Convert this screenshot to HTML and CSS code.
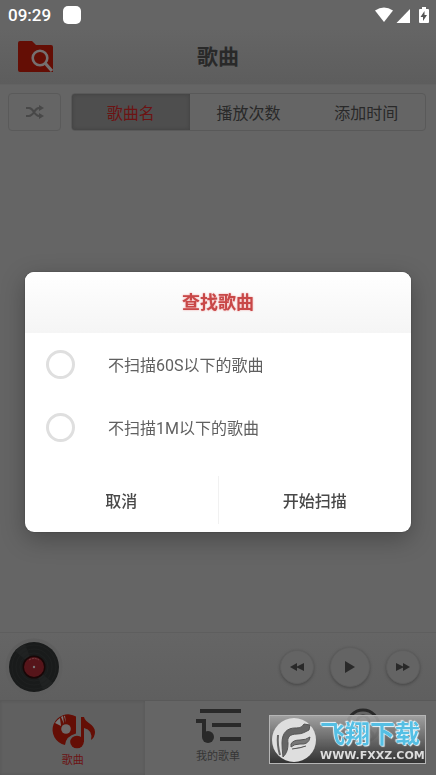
FILE: index.html
```html
<!DOCTYPE html>
<html lang="zh-CN">
<head>
<meta charset="utf-8">
<meta name="viewport" content="width=device-width, initial-scale=1">
<title>歌曲</title>
<link rel="stylesheet" href="styles.css">
</head>
<body>
<div class="app">
  <div class="status">
    <span class="clock">09:29</span>
    <span class="notice"></span>
    <svg class="status-icons" width="56" height="18" viewBox="0 0 56 18" fill="#fff">
      <path d="M1 4.600Q10 -1.600 19 4.600L10 16Z"/>
      <path d="M36 3V17H22.500Z"/>
      <path d="M46 3h2V1h4v2h2q1 0 1 1v12q0 1-1 1h-8q-1 0-1-1V4q0-1 1-1Z"/>
      <path d="M50.500 5l-4 6H49v4l4-6h-2.500Z" fill="#555"/>
    </svg>
  </div>
  <header class="header">
    <button class="scan" aria-label="查找歌曲">
      <svg width="36" height="32" viewBox="0 0 36 32">
        <path d="M2 0h12l4 4h15q2 0 2 2v25H2q-2 0-2-2V2q0-2 2-2Z" fill="#640e05"/>
        <circle cx="22" cy="17" r="7.300" fill="none" stroke="#757070" stroke-width="2.600"/>
        <path d="M27 22L34 30" stroke="#757070" stroke-width="3.200"/>
      </svg>
    </button>
    <h1 class="title">歌曲</h1>
  </header>
  <div class="toolbar">
    <button class="shuffle" aria-label="随机播放">
      <svg width="18" height="14" viewBox="0 0 18 14" fill="none" stroke="#484848" stroke-width="2">
        <path d="M0 3h3c5 0 5 8 10 8h1M0 11h3c5 0 5-8 10-8h1"/>
        <path d="M13 0l5 3-5 3ZM13 8l5 3-5 3Z" fill="#484848" stroke="none"/>
      </svg>
    </button>
    <div class="segments">
      <button class="segment active">歌曲名</button>
      <button class="segment">播放次数</button>
      <button class="segment">添加时间</button>
    </div>
  </div>
  <main class="list"></main>
  <section class="player">
    <svg class="disc" width="58" height="58" viewBox="0 0 58 58">
      <circle cx="29" cy="29" r="28.500" fill="#5f5f5f"/>
      <circle cx="29" cy="29" r="25" fill="#191b1b"/>
      <path d="M29 29L10 13A25 25 0 0 1 20 6ZM29 29L48 45A25 25 0 0 1 38 52Z" fill="#202222"/>
      <g fill="none" stroke="#1e2020"><circle cx="29" cy="29" r="22"/><circle cx="29" cy="29" r="18"/><circle cx="29" cy="29" r="14"/></g>
      <circle cx="29" cy="29" r="11.500" fill="#180707"/>
      <circle cx="29" cy="29" r="10" fill="#56151a"/>
      <path d="M24 22q5-3 10 0" fill="none" stroke="#744045" stroke-dasharray="2 1"/>
      <circle cx="29" cy="29" r="1.200" fill="#777"/>
    </svg>
    <div class="controls">
      <button class="round" aria-label="上一首"><svg width="14" height="10" viewBox="0 0 14 10"><path d="M7 1v8L0 5ZM14 1v8L6 5Z"/></svg></button>
      <button class="round play" aria-label="播放"><svg width="10" height="14" viewBox="0 0 10 14"><path d="M0 1l10 6-10 6Z"/></svg></button>
      <button class="round" aria-label="下一首"><svg width="14" height="10" viewBox="0 0 14 10"><path d="M0 1v8l8-4ZM7 1v8l7-4Z"/></svg></button>
    </div>
  </section>
  <nav class="tabs">
    <a class="tab current" href="#songs">
      <svg width="46" height="40" viewBox="0 0 46 40">
        <path d="M26 5.500A15.500 15.500 0 1 0 15 34Q16 25 26 22.500Z" fill="#640e05"/>
        <path d="M11 15L5 12q2-3 5-5ZM14 13L11 6l2-1ZM16 12L14 5l1-.3Z" fill="#777"/>
        <circle cx="16" cy="18" r="4.800" fill="#6e6a6a"/>
        <ellipse cx="27" cy="31" rx="6.800" ry="6.300" fill="#640e05"/>
        <path d="M31 6h3c1 6 11 7 11 15q0 5-4 8 2-10-7-12v14h-3Z" fill="#640e05"/>
      </svg>
      <span>歌曲</span>
    </a>
    <a class="tab mine" href="#lists">
      <svg width="46" height="36" viewBox="0 0 46 36" fill="#292929">
        <path d="M5 1h41v4H5ZM17 15h29v4H17ZM25 29h21v4H25ZM1 11h10v18H7V15H1Z"/>
        <circle cx="13" cy="29" r="6"/>
      </svg>
      <span>我的歌单</span>
    </a>
    <a class="tab mine" href="#me">
      <svg width="36" height="36" viewBox="0 0 36 36" fill="none" stroke="#292929" stroke-width="3">
        <circle cx="18" cy="18" r="16"/><circle cx="18" cy="14" r="6"/><path d="M7 29q2-8 11-8t11 8"/>
      </svg>
      <span>我的</span>
    </a>
  </nav>
</div>

<div class="overlay">
  <form class="dialog" role="dialog" aria-labelledby="dialog-title">
    <h2 class="dialog-title" id="dialog-title">查找歌曲</h2>
    <div class="options">
      <label class="option"><input class="check" type="checkbox"><span>不扫描60S以下的歌曲</span></label>
      <label class="option"><input class="check" type="checkbox"><span>不扫描1M以下的歌曲</span></label>
    </div>
    <div class="actions">
      <button class="action" type="button">取消</button>
      <button class="action" type="button">开始扫描</button>
    </div>
  </form>
</div>

<div class="watermark">
  <svg width="46" height="46" viewBox="0 0 46 46">
    <circle cx="23" cy="23" r="22" fill="#dedede"/>
    <path d="M7 18q-1 10 2 20" fill="none" stroke="#666" stroke-width="2"/>
    <path d="M12 40q-1-8-1-14c0-11 6-15 13-15 5 0 7-1 9-4l6 1-1 5c-4 2-7 4-12 4-8 0-10 4-9 9 0 6-1 10-5 14Z" fill="#666" stroke="#555"/>
    <path d="M20 27q2-4 9-4 6 0 10-3-1 8-10 7-6 0-9 3ZM21 32q9-1 14-3" fill="#777" stroke="#555"/>
  </svg>
  <div class="brand"><strong>飞翔下载</strong><small>WWW.FXXZ.COM</small></div>
</div>
</body>
</html>
```

FILE: styles.css
```css
* { box-sizing: border-box; }
body {
  margin: 0;
  background: #656565;
  color: #292929;
  font-family: Roboto, "Noto Sans CJK SC", sans-serif;
}
button {
  margin: 0;
  padding: 0;
  border: 0;
  background: none;
  color: inherit;
  font: inherit;
}
svg { display: block; flex: none; }
.app { display: flex; flex-direction: column; min-height: 100vh; }

.status {
  display: flex;
  align-items: center;
  height: 29px;
  padding: 0 6px 0 8px;
  color: #fff;
}
.clock { font-size: 17px; font-weight: 500; line-height: 30px; }
.notice { width: 18px; height: 18px; margin-left: 12px; border-radius: 5px; background: #fff; }
.status-icons { margin-left: auto; }

.header {
  display: grid;
  grid-template-columns: 1fr auto 1fr;
  align-items: center;
  height: 56px;
  padding: 0 18px;
  border-bottom: 1px solid #626262;
  background: linear-gradient(#656565, #5d5d5d);
}
.title { margin: 0; font-size: 21px; font-weight: 700; line-height: 30px; }

.toolbar { display: flex; gap: 10px; padding: 8px 10px 0 8px; }
.shuffle {
  display: grid;
  place-items: center;
  width: 53px;
  height: 38px;
  border: 1px solid #5a5a5a;
  border-radius: 4px;
}
.segments {
  display: flex;
  flex: 1;
  height: 38px;
  border: 1px solid #595959;
  border-radius: 4px;
  overflow: hidden;
}
.segment { flex: 1; font-size: 16px; }
.segment.active {
  background: #4e4e4e;
  box-shadow: inset 0 0 4px #404040;
  color: #6c1313;
}
.list { flex: 1; }

.player {
  display: flex;
  align-items: center;
  justify-content: space-between;
  height: 68px;
  padding: 0 16px 0 5px;
  border-top: 1px solid #5e5e5e;
  background: linear-gradient(#656565, #5f5f5f);
}
.controls { display: flex; align-items: center; gap: 16px; }
.round {
  display: grid;
  place-items: center;
  width: 34px;
  height: 34px;
  border: 1px solid #5e5e5e;
  border-radius: 50%;
  background: #646464;
  box-shadow: 0 1px 3px #464646;
  fill: #292929;
}
.play { width: 40px; height: 40px; }

.tabs { display: flex; height: 75px; border-top: 1px solid #595959; }
.tab {
  display: flex;
  flex: 1;
  flex-direction: column;
  align-items: center;
  padding-top: 10px;
  color: #353535;
  font-size: 11px;
  line-height: 20px;
  text-decoration: none;
}
.tab.current {
  background: #606060;
  box-shadow: inset 0 0 3px #555;
  color: #6c1313;
}
.mine { padding-top: 7px; }
.mine span { padding-top: 3px; }

.overlay {
  position: fixed;
  inset: 0;
  display: flex;
  align-items: center;
  justify-content: center;
  padding: 28px 25px 0;
}
.dialog {
  flex: 1;
  max-width: 480px;
  border-radius: 9px;
  background: #fff;
  box-shadow: 0 7px 24px rgba(0, 0, 0, .28), 0 0 2px rgba(0, 0, 0, .3);
  color: #606060;
  overflow: hidden;
}
.dialog-title {
  margin: 0;
  background: linear-gradient(#fff, #f5f5f5);
  color: #c84848;
  font-size: 18px;
  font-weight: 700;
  line-height: 61px;
  text-align: center;
  text-shadow: 0 0 2px #e99;
}
.option {
  display: flex;
  align-items: center;
  gap: 33px;
  height: 63px;
  padding-left: 21px;
  font-size: 16px;
}
.check {
  appearance: none;
  width: 29px;
  height: 29px;
  margin: 0;
  border: 3px solid #dfdfdf;
  border-radius: 50%;
}
.check:checked { border-color: #c84848; }
.actions { display: flex; padding: 17px 0 8px; }
.action {
  flex: 1;
  height: 48px;
  color: #484848;
  font-size: 16px;
  font-weight: 500;
}
.action + .action { border-left: 1px solid #f1f1f1; }

.watermark {
  position: fixed;
  right: 10px;
  bottom: 11px;
  display: flex;
  align-items: center;
  gap: 3px;
  width: 157px;
  height: 49px;
  padding-left: 1px;
  border: 1px solid #b5b5b5;
  background: linear-gradient(rgba(170, 170, 170, .85), rgba(45, 45, 45, .9));
}
.brand { display: flex; flex-direction: column; padding-top: 3px; color: #ddd; }
.brand strong {
  color: #55bfe4;
  font-size: 25px;
  font-weight: 700;
  line-height: 29px;
  text-shadow: 0 0 1px #fff, 1px 1px 1px #e8f8ff, -1px -1px 1px #e8f8ff;
}
.brand small { font-family: "DejaVu Sans", sans-serif; font-size: 11px; font-weight: 700; line-height: 14px; }
```
